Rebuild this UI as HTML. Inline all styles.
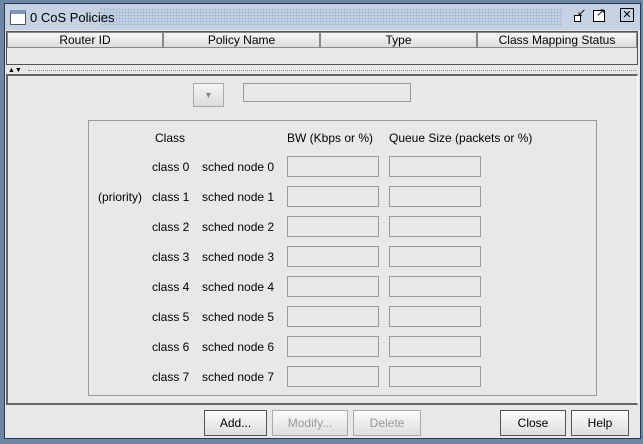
<!DOCTYPE html>
<html><head><style>
*{box-sizing:border-box;margin:0;padding:0}
body{width:643px;height:444px;background:#6d86a6;position:relative;overflow:hidden;font-family:"Liberation Sans",sans-serif;font-size:12px;color:#000}
.a{position:absolute}
.win{left:4px;top:3px;width:637px;height:436px;background:#e8e8e8;border:1px solid #2c3a4e}
.title{left:5px;top:4px;width:635px;height:26px;background:#c5d2e3}
.dots{left:100px;top:8px;width:462px;height:18px;background-image:radial-gradient(#a3b6cf 0.8px,transparent 0.9px);background-size:3px 3px}
.hdr{top:32px;height:16px;background:linear-gradient(#f6f6f6,#dcdcdc);border:1px solid #888;text-align:center;line-height:14px}
.tf{background:#e8e8e8;border:1px solid #999}
.btn{top:410px;height:26px;border:1px solid #555;background:linear-gradient(#fbfbfb,#dedede);text-align:center;line-height:24px}
.dis{border-color:#aaa;color:#999}
.lbl{white-space:nowrap}
</style></head><body>
<div class="a win"></div>
<div class="a title"></div>
<div class="a dots"></div>
<div class="a" style="left:10px;top:10px;width:16px;height:15px;border:1px solid #555;background:#fff;border-top:4px solid #7f95b5"></div>
<div class="a lbl" style="left:30px;top:10px;font-size:13px">0 CoS Policies</div>
<div class="a" style="left:577px;top:8px;width:10px;height:10px;font-size:11px;line-height:10px">&#x2199;</div>
<div class="a" style="left:574px;top:15px;width:7px;height:7px;border:1px solid #000;background:#fff"></div>
<div class="a" style="left:593px;top:10px;width:12px;height:12px;border:1px solid #000;background:#fff"></div>
<div class="a" style="left:596px;top:8px;width:10px;height:10px;font-size:11px;line-height:10px">&#x2197;</div>
<div class="a" style="left:620px;top:8px;width:14px;height:14px;border:1px solid #000;background:#c5d2e3;text-align:center;line-height:12px;font-size:11px">&#x2715;</div>
<div class="a" style="left:6px;top:31px;width:632px;height:34px;border:1px solid #555;background:#e8e8e8"></div>
<div class="a hdr" style="left:7px;width:156px">Router ID</div>
<div class="a hdr" style="left:163px;width:157px">Policy Name</div>
<div class="a hdr" style="left:320px;width:157px">Type</div>
<div class="a hdr" style="left:477px;width:160px">Class Mapping Status</div>
<div class="a" style="left:8px;top:67px;font-size:7px;line-height:7px">&#9650;&#9660;</div>
<div class="a" style="left:28px;top:70px;width:608px;border-top:1px dotted #888"></div>
<div class="a" style="left:6px;top:74px;width:632px;height:331px;border-top:2px solid #666;border-left:2px solid #666;border-bottom:2px solid #666;border-right:1px solid #fff"></div>
<div class="a" style="left:193px;top:83px;width:31px;height:24px;border:1px solid #aaa;background:linear-gradient(#f4f4f4,#dcdcdc);text-align:center;line-height:22px;color:#888;font-size:9px">&#9660;</div>
<div class="a tf" style="left:243px;top:83px;width:168px;height:19px"></div>
<div class="a" style="left:88px;top:120px;width:509px;height:276px;border:1px solid #999"></div>
<div class="a lbl" style="left:155px;top:131px">Class</div>
<div class="a lbl" style="left:287px;top:131px">BW (Kbps or %)</div>
<div class="a lbl" style="left:389px;top:131px">Queue Size (packets or %)</div>
<div class="a lbl" style="left:98px;top:190px">(priority)</div>
<div id="rows"></div>
<script>
var h='';for(var i=0;i<8;i++){var y=156+i*30;
h+='<div class="a lbl" style="left:152px;top:'+(y+4)+'px">class '+i+'</div><div class="a lbl" style="left:202px;top:'+(y+4)+'px">sched node '+i+'</div><div class="a tf" style="left:287px;top:'+y+'px;width:92px;height:21px"></div><div class="a tf" style="left:389px;top:'+y+'px;width:92px;height:21px"></div>';}
document.getElementById('rows').innerHTML=h;
</script>
<div class="a btn" style="left:204px;width:63px">Add...</div>
<div class="a btn dis" style="left:272px;width:76px">Modify...</div>
<div class="a btn dis" style="left:353px;width:68px">Delete</div>
<div class="a btn" style="left:500px;width:66px">Close</div>
<div class="a btn" style="left:571px;width:58px">Help</div>
</body></html>
